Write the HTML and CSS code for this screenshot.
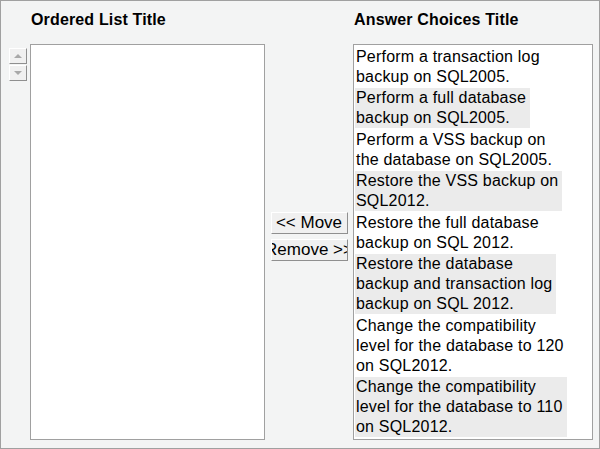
FILE: index.html
```html
<!DOCTYPE html>
<html lang="en">
<head>
  <meta charset="UTF-8">
  <title>Ordered List Question</title>
  <link rel="stylesheet" href="styles.css">
</head>
<body>

  <div class="frame">
    <div class="ordered">
      <div class="arrows">
        <button class="arrow-btn" title="Move up"><span class="tri up"></span></button>
        <button class="arrow-btn" title="Move down"><span class="tri down"></span></button>
      </div>
      <div class="group">
        <h2>Ordered List Title</h2>
        <div class="list ordered-list"></div>
      </div>
    </div>

    <div class="actions">
      <button class="action-btn">&lt;&lt; Move</button>
      <button class="action-btn">Remove &gt;&gt;</button>
    </div>

    <div class="group">
      <h2>Answer Choices Title</h2>
      <div class="list choices">
        <div class="choice">Perform a transaction log<br>backup on SQL2005.</div>
        <div class="choice alt">Perform a full database<br>backup on SQL2005.</div>
        <div class="choice">Perform a VSS backup on<br>the database on SQL2005.</div>
        <div class="choice alt">Restore the VSS backup on<br>SQL2012.</div>
        <div class="choice">Restore the full database<br>backup on SQL 2012.</div>
        <div class="choice alt">Restore the database<br>backup and transaction log<br>backup on SQL 2012.</div>
        <div class="choice">Change the compatibility<br>level for the database to 120<br>on SQL2012.</div>
        <div class="choice alt">Change the compatibility<br>level for the database to 110<br>on SQL2012.</div>
      </div>
    </div>
  </div>

</body>
</html>
```

FILE: styles.css
```css
body {
  margin: 0;
  font-family: 'Liberation Sans', Arial, sans-serif;
  color: #000;
}

.frame {
  box-sizing: border-box;
  width: 600px;
  height: 449px;
  border: 1px solid #a0a0a0;
  background: #f3f4f4;
  padding: 9px 0 0 8px;
  display: flex;
}

h2 {
  font-size: 16px;
  line-height: 19px;
  font-weight: bold;
  margin: 0 0 15px;
  padding-left: 1px;
  letter-spacing: 0.15px;
}

.ordered {
  display: flex;
  gap: 3px;
}

.arrows {
  display: flex;
  flex-direction: column;
  gap: 1px;
  padding-top: 38px;
}

.arrow-btn {
  width: 18px;
  height: 16px;
  padding: 0;
  background: #f0f0f0;
  border: 1px solid;
  border-color: #fff #8f8f8f #8f8f8f #fff;
  display: flex;
  align-items: center;
  justify-content: center;
}

.tri {
  width: 0;
  height: 0;
  border-left: 4px solid transparent;
  border-right: 4px solid transparent;
}

.tri.up {
  border-bottom: 4px solid #a8a8a8;
}

.tri.down {
  border-top: 4px solid #a8a8a8;
}

.list {
  box-sizing: border-box;
  background: #fff;
  border: 1px solid #a0a0a0;
  height: 396px;
}

.ordered-list {
  width: 235px;
}

.actions {
  width: 88px;
  display: flex;
  flex-direction: column;
  align-items: center;
  justify-content: center;
  gap: 5px;
  padding-top: 14px;
}

.action-btn {
  box-sizing: border-box;
  width: 77px;
  height: 22px;
  padding: 0;
  font-family: 'Liberation Sans', Arial, sans-serif;
  font-size: 17px;
  color: #000;
  background: #f0f0f0;
  border: 1px solid;
  border-color: #fff #8f8f8f #8f8f8f #fff;
  overflow: hidden;
  white-space: nowrap;
  display: flex;
  justify-content: center;
  align-items: center;
}

.choices {
  width: 240px;
  padding: 1.5px 1px;
}

.choice {
  width: fit-content;
  white-space: nowrap;
  font-size: 16px;
  line-height: 20px;
  letter-spacing: 0.2px;
  padding: 0 4px 0 1px;
  margin-bottom: 1.5px;
}

.choice.alt {
  background: #ebebeb;
}
```
